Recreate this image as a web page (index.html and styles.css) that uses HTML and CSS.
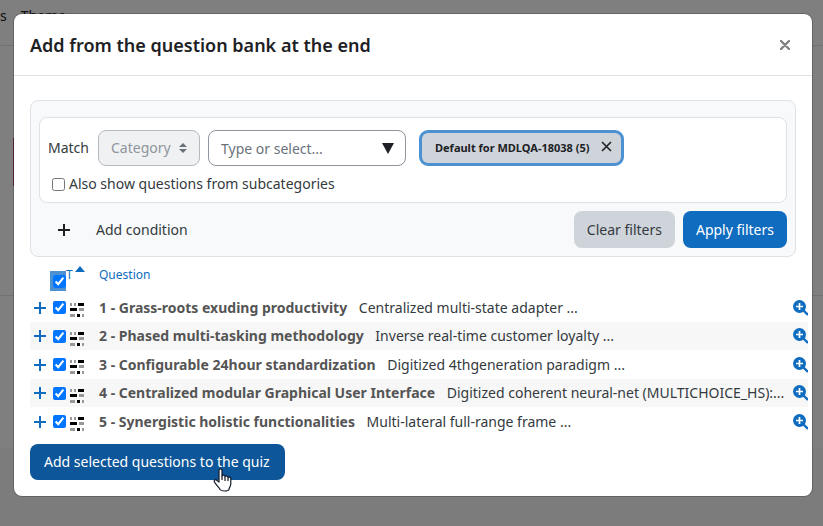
FILE: index.html
```html
<!DOCTYPE html>
<html lang="en">

<head>
    <meta charset="UTF-8">
    <meta name="viewport" content="width=device-width, initial-scale=1.0">
    <title>Question bank</title>
    <link rel="stylesheet" href="styles.css">
</head>

<body>
    <svg class="sprite" aria-hidden="true">
        <symbol id="plus" viewBox="0 0 14 14">
            <path d="M7 1v12M1 7h12" stroke="currentColor" stroke-width="2" fill="none" />
        </symbol>
        <symbol id="qtype" viewBox="0 0 14 14">
            <path fill="#999" d="M0 0h2v3H0zM4 0h2v3H4zM9 5h5v3H9zM0 11h5v3H0zM12 11h2v3h-2z" />
            <path fill="#000" d="M8 0h6v3H8zM0 5h7v3H0zM7 11h3v3H7z" />
        </symbol>
        <symbol id="zoom" viewBox="0 0 15 16">
            <circle cx="6.5" cy="6.5" r="6.5" fill="currentColor" />
            <path d="M10 10l5 5" stroke="currentColor" stroke-width="2.4" />
            <path d="M6.5 3v7M3 6.5h7" stroke="#fff" stroke-width="1.7" />
        </symbol>
    </svg>

    <div class="page">
        <nav class="page-nav">
            <a href="#">s</a>
            <a href="#">Theme</a>
        </nav>
        <div class="page-content">
            <div class="page-mark"></div>
        </div>
        <div class="page-rest"></div>
        <div class="page-footer"></div>
    </div>

    <div class="backdrop">
        <div class="modal" role="dialog" aria-labelledby="title">
            <header class="modal-header">
                <h1 id="title">Add from the question bank at the end</h1>
                <button type="button" class="close" aria-label="Close">
                    <svg width="10" height="10" viewBox="0 0 10 10"><path d="M1 1l8 8M9 1l-8 8" stroke="#7f7f7f" stroke-width="2.4" stroke-linecap="round" /></svg>
                </button>
            </header>

            <div class="modal-body">
                <form class="filters">
                    <div class="condition">
                        <div class="condition-row">
                            <label for="type">Match</label>
                            <span class="select">
                                <select id="type" disabled>
                                    <option>Category</option>
                                </select>
                                <svg width="8" height="10" viewBox="0 0 8 10"><path d="M4 0l4 4H0zM4 10l4-4H0z" fill="#6a737b" /></svg>
                            </span>
                            <span class="combo">
                                <input type="text" placeholder="Type or select..." aria-label="Category">
                                <svg width="12" height="11" viewBox="0 0 12 11"><path d="M0 0h12L6 11z" fill="#1d2125" /></svg>
                            </span>
                            <span class="badge">Default for MDLQA-18038 (5)
                                <button type="button" aria-label="Remove">
                                    <svg width="11" height="11" viewBox="0 0 11 11"><path d="M1 1l9 9M10 1l-9 9" stroke="#1d2125" stroke-width="1.6" /></svg>
                                </button>
                            </span>
                        </div>
                        <div class="sub">
                            <input type="checkbox" id="sub">
                            <label for="sub">Also show questions from subcategories</label>
                        </div>
                    </div>
                    <div class="actions">
                        <button type="button" class="add">
                            <svg width="14" height="14"><use href="#plus" /></svg>
                            Add condition
                        </button>
                        <button type="button" class="btn grey">Clear filters</button>
                        <button type="submit" class="btn">Apply filters</button>
                    </div>
                </form>

                <table class="questions">
                    <thead>
                        <tr>
                            <th class="c-add"></th>
                            <th class="c-check"><span class="focus"><input type="checkbox" aria-label="Select all" checked></span></th>
                            <th class="c-type"><a href="#">T</a><svg width="10" height="6" viewBox="0 0 10 6"><path d="M5 0l5 6H0z" fill="currentColor" /></svg></th>
                            <th class="c-name"><a href="#">Question</a></th>
                            <th class="c-view"></th>
                        </tr>
                    </thead>
                    <tbody>
                        <tr>
                            <td><a href="#" aria-label="Add to quiz"><svg width="14" height="14"><use href="#plus" /></svg></a></td>
                            <td><input type="checkbox" aria-label="Select question 1" checked></td>
                            <td><svg class="qtype" width="14" height="14"><use href="#qtype" /></svg></td>
                            <td class="name"><b>1 - Grass-roots exuding productivity</b> Centralized multi-state adapter ...</td>
                            <td><a href="#" aria-label="Preview"><svg width="15" height="16"><use href="#zoom" /></svg></a></td>
                        </tr>
                        <tr>
                            <td><a href="#" aria-label="Add to quiz"><svg width="14" height="14"><use href="#plus" /></svg></a></td>
                            <td><input type="checkbox" aria-label="Select question 2" checked></td>
                            <td><svg class="qtype" width="14" height="14"><use href="#qtype" /></svg></td>
                            <td class="name"><b>2 - Phased multi-tasking methodology</b> Inverse real-time customer loyalty ...</td>
                            <td><a href="#" aria-label="Preview"><svg width="15" height="16"><use href="#zoom" /></svg></a></td>
                        </tr>
                        <tr>
                            <td><a href="#" aria-label="Add to quiz"><svg width="14" height="14"><use href="#plus" /></svg></a></td>
                            <td><input type="checkbox" aria-label="Select question 3" checked></td>
                            <td><svg class="qtype" width="14" height="14"><use href="#qtype" /></svg></td>
                            <td class="name"><b>3 - Configurable 24hour standardization</b> Digitized 4thgeneration paradigm ...</td>
                            <td><a href="#" aria-label="Preview"><svg width="15" height="16"><use href="#zoom" /></svg></a></td>
                        </tr>
                        <tr>
                            <td><a href="#" aria-label="Add to quiz"><svg width="14" height="14"><use href="#plus" /></svg></a></td>
                            <td><input type="checkbox" aria-label="Select question 4" checked></td>
                            <td><svg class="qtype" width="14" height="14"><use href="#qtype" /></svg></td>
                            <td class="name"><b>4 - Centralized modular Graphical User Interface</b> Digitized coherent neural-net (MULTICHOICE_HS):...</td>
                            <td><a href="#" aria-label="Preview"><svg width="15" height="16"><use href="#zoom" /></svg></a></td>
                        </tr>
                        <tr>
                            <td><a href="#" aria-label="Add to quiz"><svg width="14" height="14"><use href="#plus" /></svg></a></td>
                            <td><input type="checkbox" aria-label="Select question 5" checked></td>
                            <td><svg class="qtype" width="14" height="14"><use href="#qtype" /></svg></td>
                            <td class="name"><b>5 - Synergistic holistic functionalities</b> Multi-lateral full-range frame ...</td>
                            <td><a href="#" aria-label="Preview"><svg width="15" height="16"><use href="#zoom" /></svg></a></td>
                        </tr>
                    </tbody>
                </table>

                <button type="button" class="btn submit">Add selected questions to the quiz
                    <svg class="pointer" width="19" height="24" viewBox="0 0 19 24">
                        <path d="M6 14V2.5C6 .3 9 .3 9 2.5V8c.4-1.3 3-1 3 .7.6-1.2 3-.8 3 .9.7-1 2.8-.6 2.8 1V16c0 2-1.8 3.500-1.800 5.500-1 2-7.500 2-9 0C6 19 3.500 17.500 1.500 14c-1-2 1.200-3 2.500-1.500z" fill="#fff" stroke="#111827" stroke-width="1.2" stroke-linejoin="round" />
                        <path d="M9 8v4M12 9v4M15 10v3" stroke="#111827" stroke-width="1.2" />
                    </svg>
                </button>
            </div>
        </div>
    </div>
</body>

</html>
```
FILE: styles.css
```css
* {
    box-sizing: border-box;
}

body {
    margin: 0;
    height: 100vh;
    overflow: hidden;
    font-family: "Noto Sans", "Open Sans", sans-serif;
    font-size: 14px;
    line-height: 22px;
    color: #343a40;
}

button, input, select {
    font: inherit;
    color: inherit;
}

a {
    color: #0f6cbf;
    text-decoration: none;
}

svg {
    display: block;
}

.sprite {
    position: absolute;
    width: 0;
    height: 0;
}

/* page behind the dialog */
.page {
    display: flex;
    flex-direction: column;
    height: 100%;
}

.page-nav {
    display: flex;
    gap: 14px;
    height: 46px;
    padding-top: 5px;
    border-bottom: 1px solid #dee2e6;
}

.page-nav a {
    color: #1d2125;
}

.page-content {
    height: 250px;
    padding: 92px 13px 0;
    border-bottom: 1px solid #dee2e6;
}

.page-mark {
    width: 2px;
    height: 48px;
    background-color: #d05080;
}

.page-rest {
    height: 152px;
}

.page-footer {
    flex: 1;
    background-color: #f8f9fa;
}

/* dialog */
.backdrop {
    position: absolute;
    top: 0;
    left: 0;
    width: 100%;
    height: 100%;
    padding: 14px 11px 0 14px;
    background-color: rgba(0, 0, 0, .5);
}

.modal {
    background-color: #fff;
    border-radius: 8px;
    box-shadow: 0 0 0 1px rgba(0, 0, 0, .2);
}

.modal-header {
    display: flex;
    align-items: center;
    justify-content: space-between;
    height: 62px;
    padding: 0 16px;
    border-bottom: 1px solid #dee2e6;
}

h1 {
    margin: 0;
    font-size: 18px;
    font-weight: 600;
    color: #1d2125;
}

.close {
    padding: 6px;
    background: none;
    border: none;
}

.modal-body {
    padding: 24px 16px 16px;
}

.filters {
    padding: 16px 8px 8px;
    background-color: #f8f9fa;
    border: 1px solid #dee2e6;
    border-radius: 8px;
}

.condition {
    padding: 12px 8px 7px;
    background-color: #fff;
    border: 1px solid #dee2e6;
    border-radius: 8px;
}

.condition-row {
    display: flex;
    align-items: center;
    gap: 8px;
}

.condition-row label {
    width: 42px;
}

.select, .combo {
    position: relative;
}

.select select {
    display: block;
    appearance: none;
    width: 102px;
    height: 36px;
    padding: 0 12px;
    color: #8f959e;
    opacity: 1;
    background-color: #f0f1f3;
    border: 1px solid #b4b9be;
    border-radius: 8px;
}

.select svg {
    position: absolute;
    right: 13px;
    top: 13px;
}

.combo input {
    display: block;
    width: 198px;
    height: 36px;
    padding: 0 12px;
    border: 1px solid #8f959e;
    border-radius: 8px;
}

.combo input::placeholder {
    color: #6a737b;
    opacity: 1;
}

.combo svg {
    position: absolute;
    right: 12px;
    top: 13px;
}

.badge {
    display: flex;
    align-items: center;
    gap: 12px;
    height: 36px;
    margin-left: 5px;
    padding: 0 9px 0 13px;
    font-size: 11px;
    font-weight: 700;
    color: #1d2125;
    background-color: #ced4da;
    border: 3px solid #4c91d2;
    border-radius: 9px;
}

.badge button {
    padding: 0 0 4px;
    background: none;
    border: none;
}

input[type="checkbox"] {
    display: block;
    width: 13px;
    height: 13px;
    margin: 0;
    accent-color: #0075ff;
}

.sub {
    display: flex;
    align-items: center;
    gap: 4px;
    margin-top: 7px;
    padding-left: 4px;
}

.actions {
    display: flex;
    align-items: center;
    gap: 8px;
    margin-top: 8px;
}

.add {
    display: flex;
    align-items: center;
    gap: 25px;
    margin-right: auto;
    padding: 0 18px;
    background: none;
    border: none;
}

.add svg {
    color: #1d2125;
}

.btn {
    height: 37px;
    padding: 0 13px;
    color: #fff;
    background-color: #0f6cbf;
    border: none;
    border-radius: 8px;
}

.btn.grey {
    color: #343a40;
    background-color: #ced4da;
}

/* question list */
.questions {
    width: calc(100% + 12px);
    table-layout: fixed;
    border-collapse: collapse;
}

th, td {
    padding: 0;
    text-align: left;
}

thead tr {
    height: 36px;
}

th {
    font-size: 12px;
    font-weight: 400;
    vertical-align: top;
    padding-top: 7px;
    color: #0f6cbf;
}

.c-add {
    width: 23px;
}

.c-check {
    width: 13px;
}

.c-type {
    width: 33px;
}

.c-view {
    width: 15px;
}

.c-type svg {
    display: inline-block;
    margin-left: 2px;
    vertical-align: 7px;
}

.focus {
    display: block;
    width: 16px;
    margin: 7px 0 0 -3px;
    padding: 4px 0 3px 3px;
    background-color: #4c91d2;
}

tbody tr {
    height: 29px;
}

tbody tr:nth-child(even) {
    height: 28px;
    background-color: #f7f7f7;
}

tbody td:first-child {
    padding-left: 3px;
}

.qtype {
    margin: 5px 0 0 4px;
}

.name {
    overflow: hidden;
    white-space: nowrap;
}

.name b {
    margin-right: 8px;
    font-weight: 700;
    color: #555;
}

.submit {
    position: relative;
    display: block;
    height: 36px;
    padding: 0 15px 0 14px;
    margin-top: 8px;
    background-color: #0c5699;
}

/* hand cursor over the button */
.pointer {
    position: absolute;
    left: 183px;
    top: 24px;
}
```
